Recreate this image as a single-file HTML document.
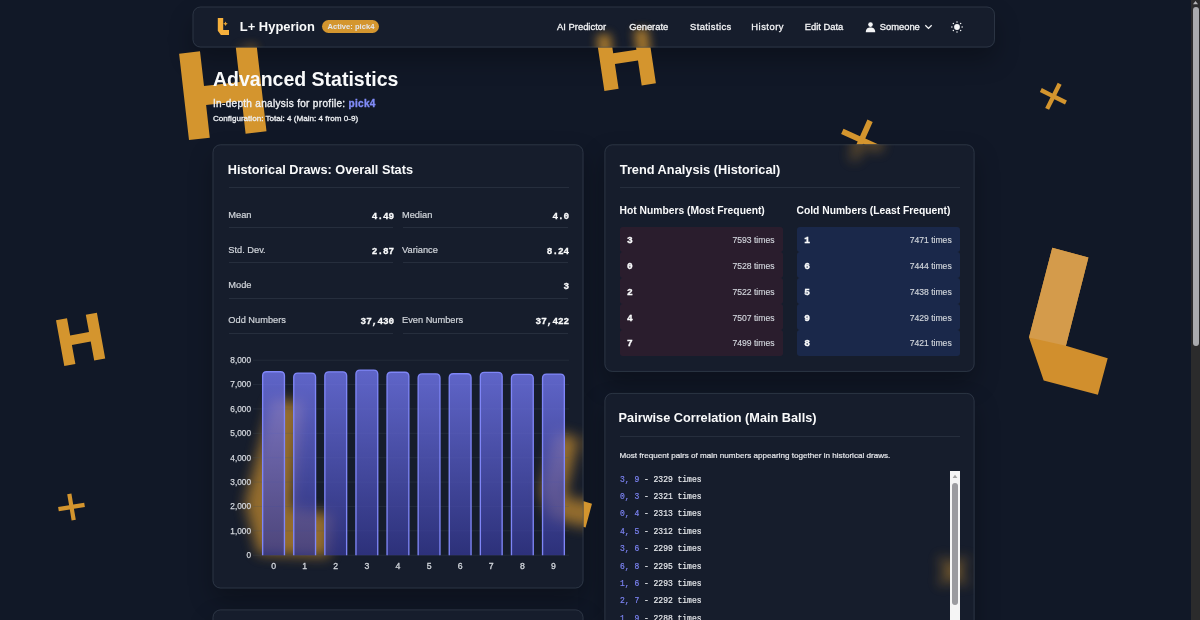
<!DOCTYPE html>
<html><head><meta charset="utf-8"><style>
*{box-sizing:border-box;margin:0;padding:0}
html,body{width:1200px;height:620px;overflow:hidden;background:#111827;font-family:"Liberation Sans",sans-serif;color:#f3f4f6}
.abs{position:absolute;white-space:pre;line-height:1}
.letters{position:absolute;left:0;top:0;z-index:1}
.glasssvg{position:absolute;left:0;top:0;z-index:2}
.glass{position:absolute;background:rgba(35,42,57,0.33);border:1px solid rgba(75,85,99,0.38);border-radius:7.5px;backdrop-filter:blur(12px);-webkit-backdrop-filter:blur(12px)}
.shd{position:absolute;border-radius:7.5px;box-shadow:0 12px 24px rgba(0,0,0,0.28);z-index:0;background:transparent}
.nav{left:192.5px;top:6.5px;width:802.5px;height:41px;z-index:5}
.card{z-index:3}
.nl{font-size:9.4px;color:#f3f4f6;top:22px;-webkit-text-stroke:0.3px #f3f4f6}
.t{font-weight:700;color:#f9fafb}
.lbl{font-size:9.25px;color:#d1d5db;-webkit-text-stroke:0.2px #d1d5db}
.val{font-family:"Liberation Mono",monospace;font-weight:700;font-size:9.33px;color:#f9fafb;text-align:right;-webkit-text-stroke:0.3px #f9fafb}
.div{position:absolute;height:1px;background:rgba(75,85,99,0.32)}
.chart{position:absolute;left:0;top:0;z-index:4}
.yl{font-size:8.27px;fill:#d1d5db;font-family:"Liberation Sans",sans-serif;stroke:#d1d5db;stroke-width:0.25px}
.xl{font-size:8.7px;fill:#d1d5db;font-family:"Liberation Sans",sans-serif;stroke:#d1d5db;stroke-width:0.3px}
.li{position:absolute;width:162.5px;height:25.92px;border-radius:3px;z-index:4}
.hot{background:rgba(60,30,48,0.55)}
.cold{background:rgba(30,55,110,0.45)}
.ln{position:absolute;left:7px;top:9.3px;font-family:"Liberation Mono",monospace;font-weight:700;font-size:9.5px;color:#f9fafb;line-height:1;-webkit-text-stroke-width:0.35px}
.lt{position:absolute;right:8px;top:9.3px;font-size:8.6px;color:#d1d5db;line-height:1;-webkit-text-stroke-width:0.15px}
.plist{position:absolute;left:620px;top:471px;width:340px;height:160px;overflow:hidden;z-index:4}
.pr{position:absolute;left:0;font-family:"Liberation Mono",monospace;font-size:8.9px;color:#e5e7eb;line-height:12px;white-space:pre;transform:scaleX(0.9);transform-origin:0 0;-webkit-text-stroke-width:0.2px}
.pa{color:#7d84f4}
.sb{position:absolute;z-index:6}
</style></head><body>
<div class="shd" style="left:192.5px;top:6.5px;width:802.5px;height:41px"></div>
<div class="shd" style="left:212.5px;top:144.3px;width:371px;height:444.2px"></div>
<div class="shd" style="left:604.4px;top:144.3px;width:370.2px;height:227.6px"></div>
<div class="shd" style="left:604.4px;top:392.9px;width:370.2px;height:300px"></div>
<div class="shd" style="left:212.5px;top:609.4px;width:371px;height:100px"></div>
<svg class="letters" width="1200" height="620" viewBox="0 0 1200 620"><polygon points="179.1,53.7 200.0,51.3 204.0,86.1 239.7,82.0 235.8,47.2 256.6,44.9 266.5,131.3 245.6,133.7 241.9,100.9 206.1,105.0 209.8,137.8 189.0,140.1" fill="#d4952e" /><polygon points="596.1,35.6 610.3,33.4 613.2,53.2 636.4,49.8 633.4,30.0 647.6,27.9 655.9,83.2 641.7,85.4 638.0,60.6 614.9,64.1 618.6,88.8 604.4,90.9" fill="#d4952e" /><polygon points="1041.8,88.1 1052.4,93.4 1057.7,82.8 1061.6,84.7 1056.3,95.3 1066.9,100.6 1065.0,104.5 1054.4,99.2 1049.1,109.8 1045.2,107.9 1050.5,97.3 1039.9,92.0" fill="#d4952e" /><polygon points="58.1,507.1 69.1,505.3 67.2,494.3 71.4,493.6 73.2,504.6 84.2,502.7 84.9,506.9 73.9,508.7 75.8,519.7 71.6,520.4 69.8,509.4 58.8,511.3" fill="#d4952e" /><polygon points="843.5,128.8 860.0,136.2 867.4,119.6 872.7,122.0 865.3,138.5 881.9,145.9 879.5,151.2 863.0,143.8 855.6,160.4 850.3,158.0 857.7,141.5 841.1,134.1" fill="#d4952e" /><polygon points="56.0,320.2 67.0,318.2 70.2,335.5 89.0,332.0 85.8,314.8 96.9,312.8 105.2,358.6 94.2,360.6 90.7,341.6 71.9,345.0 75.4,364.0 64.3,366.0" fill="#d4952e" /><polygon points="1052.3,247.7 1088.4,257.5 1065.9,345.8 1107.7,358.2 1097.9,394.8 1043.7,380.6 1029.0,337.5" fill="#d18f2d" /><polygon points="1052.3,247.7 1088.4,257.5 1065.9,345.8 1029.0,337.5" fill="#d49b4b" /><polygon points="272.0,399.0 303.0,402.0 292.0,508.0 333.0,514.0 329.0,557.0 258.0,554.0 245.0,503.0" fill="#d4952e" /><polygon points="556.0,431.9 579.5,438.2 564.8,495.6 592.0,503.7 585.6,527.5 550.4,518.3 540.8,490.2" fill="#d4952e" /><polygon points="943.1,556.9 953.0,566.8 962.9,556.9 967.1,561.1 957.2,571.0 967.1,580.9 962.9,585.1 953.0,575.2 943.1,585.1 938.9,580.9 948.8,571.0 938.9,561.1" fill="#d4952e" /></svg><svg class="glasssvg" width="1200" height="620" viewBox="0 0 1200 620"><defs><g id="LT"><polygon points="179.1,53.7 200.0,51.3 204.0,86.1 239.7,82.0 235.8,47.2 256.6,44.9 266.5,131.3 245.6,133.7 241.9,100.9 206.1,105.0 209.8,137.8 189.0,140.1" fill="#d4952e" /><polygon points="596.1,35.6 610.3,33.4 613.2,53.2 636.4,49.8 633.4,30.0 647.6,27.9 655.9,83.2 641.7,85.4 638.0,60.6 614.9,64.1 618.6,88.8 604.4,90.9" fill="#d4952e" /><polygon points="1041.8,88.1 1052.4,93.4 1057.7,82.8 1061.6,84.7 1056.3,95.3 1066.9,100.6 1065.0,104.5 1054.4,99.2 1049.1,109.8 1045.2,107.9 1050.5,97.3 1039.9,92.0" fill="#d4952e" /><polygon points="58.1,507.1 69.1,505.3 67.2,494.3 71.4,493.6 73.2,504.6 84.2,502.7 84.9,506.9 73.9,508.7 75.8,519.7 71.6,520.4 69.8,509.4 58.8,511.3" fill="#d4952e" /><polygon points="843.5,128.8 860.0,136.2 867.4,119.6 872.7,122.0 865.3,138.5 881.9,145.9 879.5,151.2 863.0,143.8 855.6,160.4 850.3,158.0 857.7,141.5 841.1,134.1" fill="#d4952e" /><polygon points="56.0,320.2 67.0,318.2 70.2,335.5 89.0,332.0 85.8,314.8 96.9,312.8 105.2,358.6 94.2,360.6 90.7,341.6 71.9,345.0 75.4,364.0 64.3,366.0" fill="#d4952e" /><polygon points="1052.3,247.7 1088.4,257.5 1065.9,345.8 1107.7,358.2 1097.9,394.8 1043.7,380.6 1029.0,337.5" fill="#d18f2d" /><polygon points="1052.3,247.7 1088.4,257.5 1065.9,345.8 1029.0,337.5" fill="#d49b4b" /><polygon points="272.0,399.0 303.0,402.0 292.0,508.0 333.0,514.0 329.0,557.0 258.0,554.0 245.0,503.0" fill="#d4952e" /><polygon points="556.0,431.9 579.5,438.2 564.8,495.6 592.0,503.7 585.6,527.5 550.4,518.3 540.8,490.2" fill="#d4952e" /><polygon points="943.1,556.9 953.0,566.8 962.9,556.9 967.1,561.1 957.2,571.0 967.1,580.9 962.9,585.1 953.0,575.2 943.1,585.1 938.9,580.9 948.8,571.0 938.9,561.1" fill="#d4952e" /></g><clipPath id="c0"><rect x="192.5" y="6.5" width="802.5" height="41.0"/></clipPath><clipPath id="r0"><rect x="192.5" y="6.5" width="802.5" height="41.0" rx="7.5"/></clipPath><filter id="b0" x="-50%" y="-50%" width="200%" height="200%"><feGaussianBlur stdDeviation="5"/></filter><clipPath id="c1"><rect x="212.5" y="144.3" width="371.0" height="444.2"/></clipPath><clipPath id="r1"><rect x="212.5" y="144.3" width="371.0" height="444.2" rx="7.5"/></clipPath><filter id="b1" x="-50%" y="-50%" width="200%" height="200%"><feGaussianBlur stdDeviation="6.5"/></filter><clipPath id="c2"><rect x="604.4" y="144.3" width="370.2" height="227.6"/></clipPath><clipPath id="r2"><rect x="604.4" y="144.3" width="370.2" height="227.6" rx="7.5"/></clipPath><filter id="b2" x="-50%" y="-50%" width="200%" height="200%"><feGaussianBlur stdDeviation="6.5"/></filter><clipPath id="c3"><rect x="604.4" y="392.9" width="370.2" height="300.0"/></clipPath><clipPath id="r3"><rect x="604.4" y="392.9" width="370.2" height="300.0" rx="7.5"/></clipPath><filter id="b3" x="-50%" y="-50%" width="200%" height="200%"><feGaussianBlur stdDeviation="6.5"/></filter><clipPath id="c4"><rect x="212.5" y="609.4" width="371.0" height="100.0"/></clipPath><clipPath id="r4"><rect x="212.5" y="609.4" width="371.0" height="100.0" rx="7.5"/></clipPath><filter id="b4" x="-50%" y="-50%" width="200%" height="200%"><feGaussianBlur stdDeviation="6.5"/></filter></defs><rect x="192.5" y="6.5" width="802.5" height="41.0" rx="7.5" fill="#161d2c"/><rect x="212.5" y="144.3" width="371.0" height="444.2" rx="7.5" fill="#161d2c"/><rect x="604.4" y="144.3" width="370.2" height="227.6" rx="7.5" fill="#161d2c"/><rect x="604.4" y="392.9" width="370.2" height="300.0" rx="7.5" fill="#161d2c"/><rect x="212.5" y="609.4" width="371.0" height="100.0" rx="7.5" fill="#161d2c"/><g clip-path="url(#r0)"><g filter="url(#b0)" opacity="0.72"><g clip-path="url(#c0)"><use href="#LT"/></g><g transform="matrix(1,0,0,-1,0,13.0)"><g clip-path="url(#c0)"><use href="#LT"/></g></g><g transform="matrix(1,0,0,-1,0,95.0)"><g clip-path="url(#c0)"><use href="#LT"/></g></g><g transform="matrix(-1,0,0,1,385.0,0)"><g clip-path="url(#c0)"><use href="#LT"/></g></g><g transform="matrix(-1,0,0,1,1990.0,0)"><g clip-path="url(#c0)"><use href="#LT"/></g></g></g></g><g clip-path="url(#r1)"><g filter="url(#b1)" opacity="0.67"><g clip-path="url(#c1)"><use href="#LT"/></g><g transform="matrix(1,0,0,-1,0,288.6)"><g clip-path="url(#c1)"><use href="#LT"/></g></g><g transform="matrix(1,0,0,-1,0,1177.0)"><g clip-path="url(#c1)"><use href="#LT"/></g></g><g transform="matrix(-1,0,0,1,425.0,0)"><g clip-path="url(#c1)"><use href="#LT"/></g></g><g transform="matrix(-1,0,0,1,1167.0,0)"><g clip-path="url(#c1)"><use href="#LT"/></g></g></g></g><g clip-path="url(#r2)"><g filter="url(#b2)" opacity="0.67"><g clip-path="url(#c2)"><use href="#LT"/></g><g transform="matrix(1,0,0,-1,0,288.6)"><g clip-path="url(#c2)"><use href="#LT"/></g></g><g transform="matrix(1,0,0,-1,0,743.8)"><g clip-path="url(#c2)"><use href="#LT"/></g></g><g transform="matrix(-1,0,0,1,1208.8,0)"><g clip-path="url(#c2)"><use href="#LT"/></g></g><g transform="matrix(-1,0,0,1,1949.2,0)"><g clip-path="url(#c2)"><use href="#LT"/></g></g></g></g><g clip-path="url(#r3)"><g filter="url(#b3)" opacity="0.67"><g clip-path="url(#c3)"><use href="#LT"/></g><g transform="matrix(1,0,0,-1,0,785.8)"><g clip-path="url(#c3)"><use href="#LT"/></g></g><g transform="matrix(1,0,0,-1,0,1385.8)"><g clip-path="url(#c3)"><use href="#LT"/></g></g><g transform="matrix(-1,0,0,1,1208.8,0)"><g clip-path="url(#c3)"><use href="#LT"/></g></g><g transform="matrix(-1,0,0,1,1949.2,0)"><g clip-path="url(#c3)"><use href="#LT"/></g></g></g></g><g clip-path="url(#r4)"><g filter="url(#b4)" opacity="0.67"><g clip-path="url(#c4)"><use href="#LT"/></g><g transform="matrix(1,0,0,-1,0,1218.8)"><g clip-path="url(#c4)"><use href="#LT"/></g></g><g transform="matrix(1,0,0,-1,0,1418.8)"><g clip-path="url(#c4)"><use href="#LT"/></g></g><g transform="matrix(-1,0,0,1,425.0,0)"><g clip-path="url(#c4)"><use href="#LT"/></g></g><g transform="matrix(-1,0,0,1,1167.0,0)"><g clip-path="url(#c4)"><use href="#LT"/></g></g></g></g><rect x="193.0" y="7.0" width="801.5" height="40.0" rx="7.5" fill="none" stroke="rgba(75,85,99,0.42)" stroke-width="1"/><rect x="213.0" y="144.8" width="370.0" height="443.2" rx="7.5" fill="none" stroke="rgba(75,85,99,0.42)" stroke-width="1"/><rect x="604.9" y="144.8" width="369.2" height="226.6" rx="7.5" fill="none" stroke="rgba(75,85,99,0.42)" stroke-width="1"/><rect x="604.9" y="393.4" width="369.2" height="299.0" rx="7.5" fill="none" stroke="rgba(75,85,99,0.42)" stroke-width="1"/><rect x="213.0" y="609.9" width="370.0" height="99.0" rx="7.5" fill="none" stroke="rgba(75,85,99,0.42)" stroke-width="1"/></svg>
<svg class="abs" style="left:217px;top:17px;z-index:6" width="14" height="20" viewBox="0 0 14 20">
<path d="M0.8 0.9 H6.2 V13.1 H12 V18.1 H3.9 L0.8 13.7 Z" fill="#f6b03c"/>
<path d="M8.5 4.4 Q8.9 6.3 10.8 6.7 Q8.9 7.1 8.5 9 Q8.1 7.1 6.2 6.7 Q8.1 6.3 8.5 4.4 Z" fill="#e9a535"/>
</svg>
<div class="abs t" style="left:239.8px;top:21px;font-size:12.95px;z-index:6">L+ Hyperion</div>
<div class="abs" style="left:322.3px;top:20.3px;width:57.2px;height:12.7px;border-radius:7px;background:#d4962f;z-index:6"></div>
<div class="abs t" style="left:327.5px;top:22.5px;font-size:7.6px;color:#e5e7eb;z-index:6">Active: pick4</div>
<div class="abs nl" style="left:557.1px;z-index:6">AI Predictor</div>
<div class="abs nl" style="left:629.2px;z-index:6">Generate</div>
<div class="abs nl" style="left:690.1px;z-index:6;letter-spacing:0.4px">Statistics</div>
<div class="abs nl" style="left:751.3px;z-index:6;letter-spacing:0.5px">History</div>
<div class="abs nl" style="left:804.7px;z-index:6">Edit Data</div>
<svg class="abs" style="left:865px;top:22px;z-index:6" width="11" height="11" viewBox="0 0 11 11">
<circle cx="5.5" cy="2.6" r="2.3" fill="#f3f4f6"/><path d="M0.8 10.2 C0.8 6.8 2.8 5.6 5.5 5.6 C8.2 5.6 10.2 6.8 10.2 10.2 Z" fill="#f3f4f6"/>
</svg>
<div class="abs nl" style="left:879.7px;z-index:6">Someone</div>
<svg class="abs" style="left:924px;top:24px;z-index:6" width="9" height="6" viewBox="0 0 9 6"><path d="M1.3 1.2 L4.5 4.4 L7.7 1.2" stroke="#f3f4f6" stroke-width="1.3" fill="none"/></svg>
<svg class="abs" style="left:950px;top:20px;z-index:6" width="14" height="14" viewBox="0 0 14 14">
<circle cx="7" cy="7" r="2.9" fill="#f3f4f6"/>
<g fill="#f3f4f6"><circle cx="7" cy="1.9" r="0.75"/><circle cx="7" cy="12.1" r="0.75"/><circle cx="1.9" cy="7" r="0.75"/><circle cx="12.1" cy="7" r="0.75"/><circle cx="3.4" cy="3.4" r="0.75"/><circle cx="10.6" cy="10.6" r="0.75"/><circle cx="3.4" cy="10.6" r="0.75"/><circle cx="10.6" cy="3.4" r="0.75"/></g>
</svg>

<div class="abs t" style="left:213px;top:70.1px;font-size:19.5px;z-index:2">Advanced Statistics</div>
<div class="abs" style="left:213px;top:98.8px;font-size:10px;letter-spacing:0.32px;color:#eef0f3;-webkit-text-stroke-width:0.35px;z-index:2">In-depth analysis for profile: <b style="color:#818cf8">pick4</b></div>
<div class="abs" style="left:213px;top:115.4px;font-size:8.1px;color:#eef0f3;-webkit-text-stroke-width:0.3px;z-index:2">Configuration: Total: 4 (Main: 4 from 0-9)</div>

<div class="abs t" style="left:227.8px;top:163.5px;font-size:12.72px;z-index:4">Historical Draws: Overall Stats</div>
<div class="div" style="left:228.5px;top:187.1px;width:340.5px;z-index:4"></div>

<div class="abs lbl" style="left:228.3px;top:210.6px;z-index:4">Mean</div>
<div class="abs val" style="left:300px;width:94.2px;top:211.5px;z-index:4">4.49</div>
<div class="div" style="left:228.5px;top:227px;width:164.5px;z-index:4"></div>
<div class="abs lbl" style="left:402px;top:210.6px;z-index:4">Median</div>
<div class="abs val" style="left:470px;width:99.2px;top:211.5px;z-index:4">4.0</div>
<div class="div" style="left:403px;top:227px;width:165px;z-index:4"></div>

<div class="abs lbl" style="left:228.3px;top:245.7px;z-index:4">Std. Dev.</div>
<div class="abs val" style="left:300px;width:94.2px;top:246.6px;z-index:4">2.87</div>
<div class="div" style="left:228.5px;top:262.4px;width:164.5px;z-index:4"></div>
<div class="abs lbl" style="left:402px;top:245.7px;z-index:4">Variance</div>
<div class="abs val" style="left:470px;width:99.2px;top:246.6px;z-index:4">8.24</div>
<div class="div" style="left:403px;top:262.4px;width:165px;z-index:4"></div>

<div class="abs lbl" style="left:228.3px;top:280.8px;z-index:4">Mode</div>
<div class="abs val" style="left:470px;width:99.2px;top:281.7px;z-index:4">3</div>
<div class="div" style="left:228.5px;top:297.6px;width:339.5px;z-index:4"></div>

<div class="abs lbl" style="left:228.3px;top:316px;z-index:4">Odd Numbers</div>
<div class="abs val" style="left:300px;width:94.2px;top:316.9px;z-index:4">37,430</div>
<div class="div" style="left:228.5px;top:332.8px;width:164.5px;z-index:4"></div>
<div class="abs lbl" style="left:402px;top:316px;z-index:4">Even Numbers</div>
<div class="abs val" style="left:470px;width:99.2px;top:316.9px;z-index:4">37,422</div>
<div class="div" style="left:403px;top:332.8px;width:165px;z-index:4"></div>
<svg class="chart" width="1200" height="620" viewBox="0 0 1200 620"><defs><linearGradient id="bg" x1="0" y1="0" x2="0" y2="1"><stop offset="0" stop-color="rgba(120,125,252,0.75)"/><stop offset="1" stop-color="rgba(53,56,148,0.75)"/></linearGradient></defs><line x1="253" y1="555.20" x2="569" y2="555.20" stroke="rgba(75,85,99,0.35)" stroke-width="0.7"/><text x="251" y="558.10" text-anchor="end" class="yl">0</text><line x1="253" y1="530.83" x2="569" y2="530.83" stroke="rgba(75,85,99,0.35)" stroke-width="0.7"/><text x="251" y="533.73" text-anchor="end" class="yl">1,000</text><line x1="253" y1="506.45" x2="569" y2="506.45" stroke="rgba(75,85,99,0.35)" stroke-width="0.7"/><text x="251" y="509.35" text-anchor="end" class="yl">2,000</text><line x1="253" y1="482.08" x2="569" y2="482.08" stroke="rgba(75,85,99,0.35)" stroke-width="0.7"/><text x="251" y="484.98" text-anchor="end" class="yl">3,000</text><line x1="253" y1="457.70" x2="569" y2="457.70" stroke="rgba(75,85,99,0.35)" stroke-width="0.7"/><text x="251" y="460.60" text-anchor="end" class="yl">4,000</text><line x1="253" y1="433.33" x2="569" y2="433.33" stroke="rgba(75,85,99,0.35)" stroke-width="0.7"/><text x="251" y="436.23" text-anchor="end" class="yl">5,000</text><line x1="253" y1="408.95" x2="569" y2="408.95" stroke="rgba(75,85,99,0.35)" stroke-width="0.7"/><text x="251" y="411.85" text-anchor="end" class="yl">6,000</text><line x1="253" y1="384.58" x2="569" y2="384.58" stroke="rgba(75,85,99,0.35)" stroke-width="0.7"/><text x="251" y="387.48" text-anchor="end" class="yl">7,000</text><line x1="253" y1="360.20" x2="569" y2="360.20" stroke="rgba(75,85,99,0.35)" stroke-width="0.7"/><text x="251" y="363.10" text-anchor="end" class="yl">8,000</text><path d="M262.65 555.20 V375.71 Q262.65 371.71 266.65 371.71 H280.45 Q284.45 371.71 284.45 375.71 V555.20 Z" fill="url(#bg)"/><path d="M262.65 555.20 V375.71 Q262.65 371.71 266.65 371.71 H280.45 Q284.45 371.71 284.45 375.71 V555.20" fill="none" stroke="#7f86f7" stroke-width="1.35"/><text x="273.55" y="569.30" text-anchor="middle" class="xl">0</text><path d="M293.75 555.20 V377.09 Q293.75 373.09 297.75 373.09 H311.55 Q315.55 373.09 315.55 377.09 V555.20 Z" fill="url(#bg)"/><path d="M293.75 555.20 V377.09 Q293.75 373.09 297.75 373.09 H311.55 Q315.55 373.09 315.55 377.09 V555.20" fill="none" stroke="#7f86f7" stroke-width="1.35"/><text x="304.65" y="569.30" text-anchor="middle" class="xl">1</text><path d="M324.85 555.20 V375.85 Q324.85 371.85 328.85 371.85 H342.65 Q346.65 371.85 346.65 375.85 V555.20 Z" fill="url(#bg)"/><path d="M324.85 555.20 V375.85 Q324.85 371.85 328.85 371.85 H342.65 Q346.65 371.85 346.65 375.85 V555.20" fill="none" stroke="#7f86f7" stroke-width="1.35"/><text x="335.75" y="569.30" text-anchor="middle" class="xl">2</text><path d="M355.95 555.20 V374.12 Q355.95 370.12 359.95 370.12 H373.75 Q377.75 370.12 377.75 374.12 V555.20 Z" fill="url(#bg)"/><path d="M355.95 555.20 V374.12 Q355.95 370.12 359.95 370.12 H373.75 Q377.75 370.12 377.75 374.12 V555.20" fill="none" stroke="#7f86f7" stroke-width="1.35"/><text x="366.85" y="569.30" text-anchor="middle" class="xl">3</text><path d="M387.05 555.20 V376.22 Q387.05 372.22 391.05 372.22 H404.85 Q408.85 372.22 408.85 376.22 V555.20 Z" fill="url(#bg)"/><path d="M387.05 555.20 V376.22 Q387.05 372.22 391.05 372.22 H404.85 Q408.85 372.22 408.85 376.22 V555.20" fill="none" stroke="#7f86f7" stroke-width="1.35"/><text x="397.95" y="569.30" text-anchor="middle" class="xl">4</text><path d="M418.15 555.20 V377.90 Q418.15 373.90 422.15 373.90 H435.95 Q439.95 373.90 439.95 377.90 V555.20 Z" fill="url(#bg)"/><path d="M418.15 555.20 V377.90 Q418.15 373.90 422.15 373.90 H435.95 Q439.95 373.90 439.95 377.90 V555.20" fill="none" stroke="#7f86f7" stroke-width="1.35"/><text x="429.05" y="569.30" text-anchor="middle" class="xl">5</text><path d="M449.25 555.20 V377.75 Q449.25 373.75 453.25 373.75 H467.05 Q471.05 373.75 471.05 377.75 V555.20 Z" fill="url(#bg)"/><path d="M449.25 555.20 V377.75 Q449.25 373.75 453.25 373.75 H467.05 Q471.05 373.75 471.05 377.75 V555.20" fill="none" stroke="#7f86f7" stroke-width="1.35"/><text x="460.15" y="569.30" text-anchor="middle" class="xl">6</text><path d="M480.35 555.20 V376.41 Q480.35 372.41 484.35 372.41 H498.15 Q502.15 372.41 502.15 376.41 V555.20 Z" fill="url(#bg)"/><path d="M480.35 555.20 V376.41 Q480.35 372.41 484.35 372.41 H498.15 Q502.15 372.41 502.15 376.41 V555.20" fill="none" stroke="#7f86f7" stroke-width="1.35"/><text x="491.25" y="569.30" text-anchor="middle" class="xl">7</text><path d="M511.45 555.20 V378.31 Q511.45 374.31 515.45 374.31 H529.25 Q533.25 374.31 533.25 378.31 V555.20 Z" fill="url(#bg)"/><path d="M511.45 555.20 V378.31 Q511.45 374.31 515.45 374.31 H529.25 Q533.25 374.31 533.25 378.31 V555.20" fill="none" stroke="#7f86f7" stroke-width="1.35"/><text x="522.35" y="569.30" text-anchor="middle" class="xl">8</text><path d="M542.55 555.20 V378.12 Q542.55 374.12 546.55 374.12 H560.35 Q564.35 374.12 564.35 378.12 V555.20 Z" fill="url(#bg)"/><path d="M542.55 555.20 V378.12 Q542.55 374.12 546.55 374.12 H560.35 Q564.35 374.12 564.35 378.12 V555.20" fill="none" stroke="#7f86f7" stroke-width="1.35"/><text x="553.45" y="569.30" text-anchor="middle" class="xl">9</text></svg>

<div class="abs t" style="left:619.8px;top:163.6px;font-size:12.78px;z-index:4">Trend Analysis (Historical)</div>
<div class="div" style="left:620px;top:186.5px;width:340px;z-index:4"></div>
<div class="abs t" style="left:619.5px;top:206.4px;font-size:10.3px;z-index:4">Hot Numbers (Most Frequent)</div>
<div class="abs t" style="left:796.5px;top:206.4px;font-size:10.3px;z-index:4">Cold Numbers (Least Frequent)</div>
<div class="li hot" style="left:620.0px;top:226.50px"><span class="ln">3</span><span class="lt">7593 times</span></div><div class="li hot" style="left:620.0px;top:252.42px"><span class="ln">0</span><span class="lt">7528 times</span></div><div class="li hot" style="left:620.0px;top:278.34px"><span class="ln">2</span><span class="lt">7522 times</span></div><div class="li hot" style="left:620.0px;top:304.26px"><span class="ln">4</span><span class="lt">7507 times</span></div><div class="li hot" style="left:620.0px;top:330.18px"><span class="ln">7</span><span class="lt">7499 times</span></div><div class="li cold" style="left:797.2px;top:226.50px"><span class="ln">1</span><span class="lt">7471 times</span></div><div class="li cold" style="left:797.2px;top:252.42px"><span class="ln">6</span><span class="lt">7444 times</span></div><div class="li cold" style="left:797.2px;top:278.34px"><span class="ln">5</span><span class="lt">7438 times</span></div><div class="li cold" style="left:797.2px;top:304.26px"><span class="ln">9</span><span class="lt">7429 times</span></div><div class="li cold" style="left:797.2px;top:330.18px"><span class="ln">8</span><span class="lt">7421 times</span></div>

<div class="abs t" style="left:618.6px;top:411.8px;font-size:12.72px;z-index:4">Pairwise Correlation (Main Balls)</div>
<div class="div" style="left:620px;top:435.5px;width:340px;z-index:4"></div>
<div class="abs" style="left:619.5px;top:452.3px;font-size:8.1px;color:#e5e7eb;z-index:4;-webkit-text-stroke-width:0.2px">Most frequent pairs of main numbers appearing together in historical draws.</div>
<div class="plist"><div class="pr" style="top:2.50px"><span class="pa">3, 9</span> - 2329 times</div><div class="pr" style="top:19.90px"><span class="pa">0, 3</span> - 2321 times</div><div class="pr" style="top:37.30px"><span class="pa">0, 4</span> - 2313 times</div><div class="pr" style="top:54.70px"><span class="pa">4, 5</span> - 2312 times</div><div class="pr" style="top:72.10px"><span class="pa">3, 6</span> - 2299 times</div><div class="pr" style="top:89.50px"><span class="pa">6, 8</span> - 2295 times</div><div class="pr" style="top:106.90px"><span class="pa">1, 6</span> - 2293 times</div><div class="pr" style="top:124.30px"><span class="pa">2, 7</span> - 2292 times</div><div class="pr" style="top:141.70px"><span class="pa">1, 9</span> - 2288 times</div></div>
<div class="sb" style="left:950px;top:471px;width:10px;height:160px;background:#f5f5f5"></div>
<svg class="sb" style="left:950px;top:471px" width="10" height="10" viewBox="0 0 10 10"><path d="M2.6 7 L5 3.8 L7.4 7 Z" fill="#a3a3a3"/></svg>
<div class="sb" style="left:952px;top:483.3px;width:6px;height:122px;border-radius:3px;background:#9b9b9f"></div>


<div class="sb" style="left:1191px;top:0;width:9px;height:620px;background:#2b2b2c"></div>
<svg class="sb" style="left:1191px;top:0" width="9" height="6" viewBox="0 0 9 6"><path d="M2 4.2 L4.5 1 L7 4.2 Z" fill="#b5b5b8"/></svg>
<div class="sb" style="left:1193px;top:7px;width:6px;height:338.6px;border-radius:3px;background:#a9aaae"></div>
</body></html>
